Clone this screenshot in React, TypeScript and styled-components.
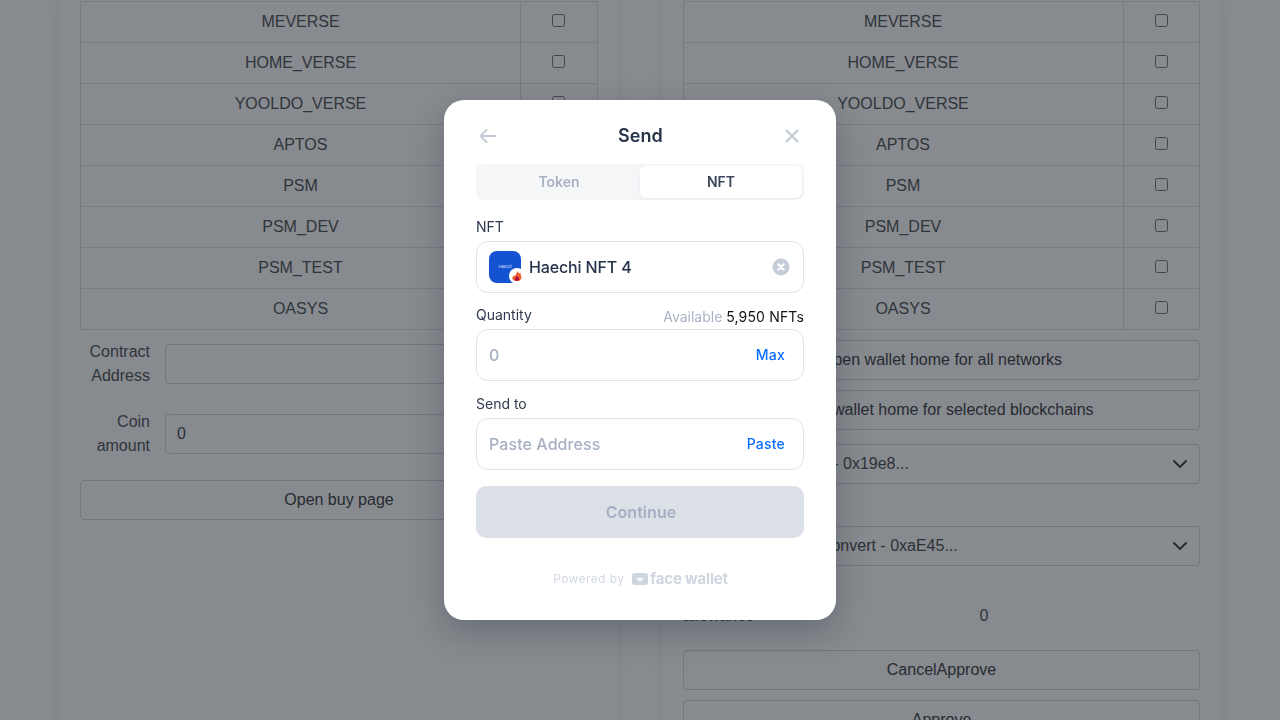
import React from "react";
import styled, { createGlobalStyle } from "styled-components";

const GlobalStyle = createGlobalStyle`
    html, body {
        margin: 0;
        height: 720px;
        overflow: hidden;
        background: #fff;
    }
    body {
        font-family: "Liberation Sans", Arial, sans-serif;
        font-size: 16px;
        line-height: 24px;
        color: #3d4145;
    }
    * { box-sizing: border-box; }
`;

const chevron = "url(\"data:image/svg+xml,%3csvg xmlns='http://www.w3.org/2000/svg' viewBox='0 0 16 16'%3e%3cpath fill='none' stroke='%23404448' stroke-linecap='round' stroke-linejoin='round' stroke-width='2' d='m2 5 6 6 6-6'/%3e%3c/svg%3e\")";

const Page = styled.div`
    display: grid;
    grid-template-columns: 558px 558px;
    justify-content: center;
    gap: 44px;
    height: 720px;
    overflow: hidden;
`;

const Card = styled.section`
    padding: 1px 20px 0 ${p => p.$right ? 21 : 20}px;
    height: 900px;
    background: #fff;
    box-shadow: 0 0 14px rgba(0, 0, 0, 0.07);
`;

const ChainTable = styled.table`
    width: 100%;
    border-collapse: collapse;
    table-layout: fixed;
    td {
        height: 41px;
        padding: 0;
        border: 1px solid #dee2e6;
        text-align: center;
        color: #505459;
    }
    td:first-child { padding-right: ${p => p.$namePad}px; }
    td:last-child { width: ${p => p.$checkWidth}px; }
`;

const RowCheck = styled.input`
    display: inline-block;
    vertical-align: middle;
    margin: 0 ${p => p.$shift}px 5px 0;
`;

const FormRow = styled.div`
    display: grid;
    grid-template-columns: 70px 1fr;
    gap: 15px;
    align-items: center;
    margin-top: ${p => p.$top ?? 0}px;
`;

const RowLabel = styled.label`
    text-align: right;
    color: #505459;
`;

const TextInput = styled.input`
    height: 40px;
    width: 100%;
    padding: 0 11px;
    font: inherit;
    color: #4a4e52;
    background: #fff;
    border: 1px solid #d6d9dd;
    border-radius: 4px;
`;

const OutlineButton = styled.button`
    display: block;
    width: 100%;
    height: 40px;
    margin-top: ${p => p.$top ?? 0}px;
    font: inherit;
    color: #3d4145;
    background: #fff;
    border: 1px solid #d6d9dd;
    border-radius: 4px;
`;

const Select = styled.select`
    display: block;
    width: 100%;
    height: 40px;
    margin-top: ${p => p.$top ?? 0}px;
    padding: 0 36px 0 9px;
    appearance: none;
    font: inherit;
    color: #4a4e52;
    background: #fff ${chevron} no-repeat right 11px center / 16px 16px;
    border: 1px solid #d6d9dd;
    border-radius: 4px;
`;

const AllowanceRow = styled.div`
    display: grid;
    grid-template-columns: 70px 1fr;
    gap: 15px;
    align-items: end;
    margin-top: 14px;
    height: 48px;
`;

const AllowanceValue = styled.div`
    text-align: center;
    color: #505459;
`;

const Overlay = styled.div`
    position: fixed;
    inset: 0;
    display: flex;
    align-items: center;
    justify-content: center;
    background: rgba(15, 21, 29, 0.5);
    font-family: Inter, "Liberation Sans", sans-serif;
`;

const Modal = styled.div`
    width: 392px;
    height: 520px;
    padding: 24px 32px 0;
    background: #fff;
    border-radius: 20px;
    box-shadow: 0 12px 32px rgba(15, 23, 42, 0.25);
`;

const Header = styled.header`
    display: flex;
    align-items: center;
    justify-content: space-between;
    height: 24px;
`;

const HeaderIcon = styled.svg`
    display: block;
    width: 24px;
    height: 24px;
    fill: none;
    stroke: #c2cad7;
    stroke-width: 1.9;
    stroke-linecap: round;
    stroke-linejoin: round;
`;

const Title = styled.h2`
    margin: 0;
    padding-left: 1px;
    font-size: 18px;
    line-height: 24px;
    font-weight: 600;
    letter-spacing: 0.05px;
    color: #263248;
`;

const Tabs = styled.div`
    display: grid;
    grid-template-columns: 1fr 1fr;
    height: 36px;
    margin-top: 16px;
    padding: 2px;
    background: #f5f6f8;
    border-radius: 8px;
`;

const Tab = styled.div`
    display: flex;
    align-items: center;
    justify-content: center;
    font-size: 14px;
    font-weight: 600;
    color: ${p => p.$active ? "#3a4659" : "#a7b1c3"};
    background: ${p => p.$active ? "#fff" : "transparent"};
    border-radius: 6px;
    box-shadow: ${p => p.$active ? "0 1px 2px rgba(30, 41, 59, 0.08)" : "none"};
`;

const FieldHead = styled.div`
    display: flex;
    justify-content: space-between;
    height: 24px;
    margin-top: ${p => p.$top}px;
    font-size: 14px;
    line-height: 20px;
    color: #2f3a4e;
`;

const Available = styled.div`
    padding-top: 2px;
    color: #a9b3c5;
    b { font-weight: 400; letter-spacing: 0.15px; color: #111317; }
`;

const InputBox = styled.div`
    display: flex;
    align-items: center;
    height: 52px;
    padding: 0 18px 0 12px;
    border: 1px solid #dfe3ea;
    border-radius: 12px;
`;

const BareInput = styled.input`
    flex: 1;
    min-width: 0;
    padding: 0;
    border: 0;
    outline: 0;
    font: inherit;
    font-size: 16px;
    font-weight: 500;
    letter-spacing: 0.08px;
    color: #263248;
    &::placeholder { color: #a6b0c2; opacity: 1; }
`;

const ActionLink = styled.button`
    padding: 0;
    border: 0;
    background: none;
    font: inherit;
    font-size: 14px;
    font-weight: 500;
    letter-spacing: 0.2px;
    color: #0a6cff;
`;

const Thumb = styled.div`
    position: relative;
    display: flex;
    align-items: center;
    justify-content: center;
    flex: none;
    width: 32px;
    height: 32px;
    margin-right: 8px;
    background: #1352d0;
    border-radius: 8px;
    font-size: 4px;
    line-height: 6px;
    color: #dfe8ff;
`;

const ThumbBadge = styled.svg`
    position: absolute;
    right: -4px;
    bottom: -1px;
    width: 16px;
    height: 16px;
`;

const SelectedName = styled.div`
    flex: 1;
    font-size: 16px;
    font-weight: 500;
    letter-spacing: -0.15px;
    color: #263248;
`;

const ClearIcon = styled.svg`
    display: block;
    width: 18px;
    height: 18px;
    margin-right: -5px;
`;

const ContinueButton = styled.button`
    display: block;
    width: 100%;
    height: 52px;
    margin-top: 16px;
    padding: 0 0 0 2px;
    border: 0;
    border-radius: 10px;
    background: #dce0e7;
    font: inherit;
    font-size: 16px;
    font-weight: 600;
    letter-spacing: 0.05px;
    color: #a5afc2;
`;

const Footer = styled.footer`
    display: flex;
    align-items: center;
    justify-content: center;
    gap: 8px;
    height: 20px;
    margin-top: 31px;
    padding-left: 1px;
    font-size: 12px;
    letter-spacing: 0.4px;
    color: #d3d9e2;
`;

const Brand = styled.div`
    display: flex;
    align-items: center;
    gap: 2px;
    font-size: 15px;
    font-weight: 700;
    letter-spacing: -0.2px;
    color: #cfd6e0;
`;

const chains = ["MEVERSE", "HOME_VERSE", "YOOLDO_VERSE", "APTOS", "PSM", "PSM_DEV", "PSM_TEST", "OASYS"];

function Chains({ checkWidth, shift, namePad }: { checkWidth: number; shift: number; namePad: number }) {
    return <ChainTable $checkWidth={checkWidth} $namePad={namePad}>
        <tbody>
            {chains.map(name => <tr key={name}>
                <td>{name}</td>
                <td><RowCheck type="checkbox" $shift={shift} /></td>
            </tr>)}
        </tbody>
    </ChainTable>;
}

export default function App() {
    return <>
        <GlobalStyle />
        <Page>
            <Card>
                <Chains checkWidth={77} shift={2} namePad={0} />
                <FormRow $top={10}>
                    <RowLabel>Contract Address</RowLabel>
                    <TextInput />
                </FormRow>
                <FormRow $top={22}>
                    <RowLabel>Coin amount</RowLabel>
                    <TextInput defaultValue="0" />
                </FormRow>
                <OutlineButton $top={22}>Open buy page</OutlineButton>
            </Card>
            <Card $right>
                <Chains checkWidth={76} shift={0} namePad={1} />
                <OutlineButton $top={10}>Open wallet home for all networks</OutlineButton>
                <OutlineButton $top={10}>Open wallet home for selected blockchains</OutlineButton>
                <Select $top={14}><option>Haechi Main Token - 0x19e8...</option></Select>
                <Select $top={42}><option>Haechi Tokens to Convert - 0xaE45...</option></Select>
                <AllowanceRow>
                    <div>Current allowance</div>
                    <AllowanceValue>0</AllowanceValue>
                </AllowanceRow>
                <OutlineButton $top={22}>CancelApprove</OutlineButton>
                <OutlineButton $top={10}>Approve</OutlineButton>
            </Card>
        </Page>
        <Overlay>
            <Modal>
                <Header>
                    <HeaderIcon viewBox="0 0 24 24"><path d="M19.5 12h-15M10.5 6l-6 6 6 6" /></HeaderIcon>
                    <Title>Send</Title>
                    <HeaderIcon viewBox="0 0 24 24"><path d="M6.5 6.5l11 11M17.5 6.5l-11 11" /></HeaderIcon>
                </Header>
                <Tabs>
                    <Tab>Token</Tab>
                    <Tab $active>NFT</Tab>
                </Tabs>
                <FieldHead $top={17}>NFT</FieldHead>
                <InputBox>
                    <Thumb>
                        Haechi
                        <ThumbBadge viewBox="0 0 16 16">
                            <circle cx="8" cy="8" r="8" fill="#fff" />
                            <path d="M8.5 3.2l1.6 2.4 1.3-.8 1.2 5.6L10 13H6l-3-2.2 1.6-3.4 1.4.6z" fill="#f2622e" />
                            <path d="M5.5 11.2L8 7.6l2.6 3.6-1.3 1.6H6.8z" fill="#b3123f" />
                        </ThumbBadge>
                    </Thumb>
                    <SelectedName>Haechi NFT 4</SelectedName>
                    <ClearIcon viewBox="0 0 18 18">
                        <circle cx="9" cy="9" r="8.5" fill="#c3ccd8" />
                        <path d="M6.4 6.4l5.2 5.2M11.6 6.4l-5.2 5.2" stroke="#fff" strokeWidth="2.2" strokeLinecap="round" />
                    </ClearIcon>
                </InputBox>
                <FieldHead $top={12}>
                    <span>Quantity</span>
                    <Available>Available <b>5,950 NFTs</b></Available>
                </FieldHead>
                <InputBox>
                    <BareInput placeholder="0" />
                    <ActionLink>Max</ActionLink>
                </InputBox>
                <FieldHead $top={13}>Send to</FieldHead>
                <InputBox>
                    <BareInput placeholder="Paste Address" />
                    <ActionLink>Paste</ActionLink>
                </InputBox>
                <ContinueButton>Continue</ContinueButton>
                <Footer>
                    <span>Powered by</span>
                    <Brand>
                        <svg width="16" height="12" viewBox="0 0 16 12">
                            <rect width="16" height="12" rx="2.5" fill="#cfd6e0" />
                            <path d="M5 5h6a3 3 0 0 1-6 0z" fill="#fff" />
                        </svg>
                        face wallet
                    </Brand>
                </Footer>
            </Modal>
        </Overlay>
    </>;
}
